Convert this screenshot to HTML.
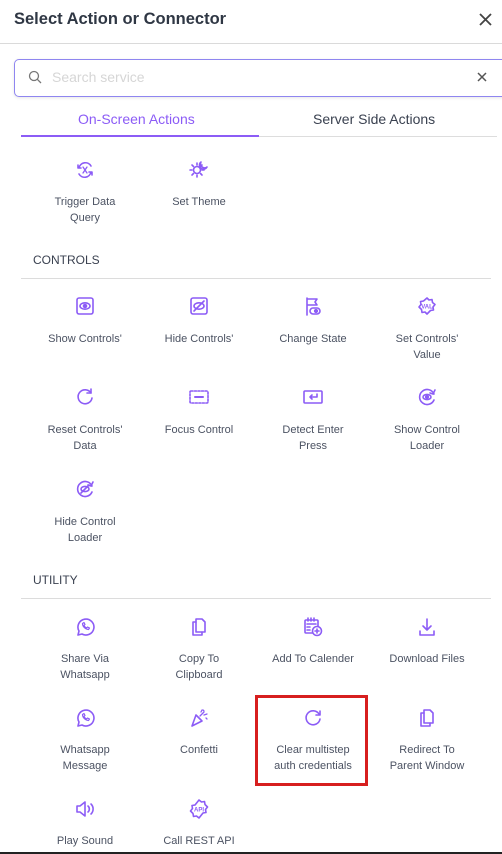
<!DOCTYPE html>
<html><head><meta charset="utf-8"><style>
*{margin:0;padding:0;box-sizing:border-box}
body{width:502px;height:854px;overflow:hidden;background:#fff;font-family:"Liberation Sans",sans-serif;position:relative;color:#4a5261}
.a{position:absolute}
.t{position:absolute;width:114px;text-align:center;font-size:11px;line-height:16px;color:#4b5262}
.i{position:absolute;width:20px;height:20px}
.i svg{width:20px;height:20px;fill:none;stroke:#8c5cf6;stroke-width:1.6;stroke-linecap:round;stroke-linejoin:round}
.h{position:absolute;left:33px;font-size:12px;color:#3a4150}
.ln{position:absolute;left:21px;width:470px;height:1px;background:#dcdcdc}
</style></head><body>
<div class="a" style="left:14px;top:10px;font-size:16.5px;font-weight:bold;color:#2f3744">Select Action or Connector</div>
<svg class="a" style="left:479px;top:13px" width="13" height="13" viewBox="0 0 13 13"><path d="M1 1l11 11M12 1L1 12" stroke="#444" stroke-width="1.8"/></svg>
<div class="a" style="left:0;top:43px;width:502px;height:1px;background:#dadada"></div>
<div class="a" style="left:14px;top:59px;width:500px;height:38px;border:1px solid #8f86f0;border-radius:5px;box-shadow:0 1px 3px rgba(0,0,0,.1)"></div>
<svg class="a" style="left:28px;top:70px" width="14" height="14" viewBox="0 0 14 14"><circle cx="6" cy="6" r="4.5" fill="none" stroke="#777" stroke-width="1.3"/><path d="M9.3 9.3L13 13" stroke="#777" stroke-width="1.3"/></svg>
<div class="a" style="left:52px;top:69px;font-size:14px;color:#d6d6d6">Search service</div>
<svg class="a" style="left:477px;top:72px" width="10" height="10" viewBox="0 0 10 10"><path d="M1 1l8 8M9 1L1 9" stroke="#555" stroke-width="1.5"/></svg>
<div class="a" style="left:78px;top:111px;font-size:14px;color:#8c5cf6">On-Screen Actions</div>
<div class="a" style="left:313px;top:111px;font-size:14px;color:#3a4150">Server Side Actions</div>
<div class="a" style="left:21px;top:135px;width:238px;height:2px;background:#8c5cf6"></div>
<div class="a" style="left:259px;top:136px;width:238px;height:1px;background:#ddd"></div>

<div class="i" style="left:75px;top:160px"><svg viewBox="0 0 20 20"><path d="M4 8a6.5 6.5 0 0 1 12-2M16 12a6.5 6.5 0 0 1-12 2M3 5v3h3M17 15v-3h-3"/><path d="M8 7l4 6M12 7l-4 6" stroke-width="1.3"/></svg></div>
<div class="i" style="left:189px;top:159px"><svg viewBox="0 0 20 20"><circle cx="8" cy="11" r="3.5"/><path d="M8 4v2M8 16v2M1 11h2M13 11h2M3 6l1.5 1.5M13 6l-1.5 1.5M3 16l1.5-1.5M13 16l-1.5-1.5"/><path d="M12 3a4 4 0 1 0 6 5 4 4 0 0 1-6-5z"/></svg></div>
<div class="t" style="left:28px;top:194px">Trigger Data<br>Query</div>
<div class="t" style="left:142px;top:194px">Set Theme</div>

<div class="h" style="top:253px">CONTROLS</div>
<div class="ln" style="top:278px"></div>

<div class="i" style="left:75px;top:296px"><svg viewBox="0 0 20 20"><rect x="2" y="2" width="16" height="16" rx="2"/><ellipse cx="10" cy="10" rx="5" ry="3.2"/><circle cx="10" cy="10" r="1.5" fill="#8c5cf6"/></svg></div>
<div class="i" style="left:189px;top:296px"><svg viewBox="0 0 20 20"><rect x="2" y="2" width="16" height="16" rx="2"/><ellipse cx="10" cy="10" rx="5" ry="3.2"/><path d="M5 15L15 5"/></svg></div>
<div class="i" style="left:303px;top:296px"><svg viewBox="0 0 20 20"><path d="M4 2v17M4 3h10l-2 3 2 3H4"/><rect x="7" y="12" width="10" height="6" rx="3"/><circle cx="13" cy="15" r="1.3" fill="#8c5cf6"/></svg></div>
<div class="i" style="left:417px;top:296px"><svg viewBox="0 0 20 20"><path d="M10 2l2 2 3-0.5.5 3 2.5 2-2 2.5.5 3-3 .5L10 18l-2-2-3 .5-.5-3L2 11l2-2.5L3.5 5.5l3-.5z"/><text x="10" y="12.5" font-size="6" text-anchor="middle" fill="#8c5cf6" stroke="none" font-family="Liberation Sans" font-weight="bold">VAL</text></svg></div>
<div class="t" style="left:28px;top:331px">Show Controls'</div>
<div class="t" style="left:142px;top:331px">Hide Controls'</div>
<div class="t" style="left:256px;top:331px">Change State</div>
<div class="t" style="left:370px;top:331px">Set Controls'<br>Value</div>

<div class="i" style="left:75px;top:387px"><svg viewBox="0 0 20 20"><path d="M16 6a7 7 0 1 0 1 5"/><path d="M16 2v4h-4" /></svg></div>
<div class="i" style="left:189px;top:387px"><svg viewBox="0 0 20 20"><rect x="1" y="4" width="18" height="12" rx="1" stroke-dasharray="2 1.5"/><path d="M6 10h8" stroke-width="2"/></svg></div>
<div class="i" style="left:303px;top:387px"><svg viewBox="0 0 20 20"><rect x="1" y="4" width="18" height="12" rx="1"/><path d="M14 7v3H7M9 8l-2 2 2 2"/></svg></div>
<div class="i" style="left:417px;top:387px"><svg viewBox="0 0 20 20"><path d="M17 7a7.5 7.5 0 1 0 0 6"/><path d="M18 3l-2 4-3-1"/><ellipse cx="10" cy="10" rx="4" ry="2.6"/><circle cx="10" cy="10" r="1.3" fill="#8c5cf6"/></svg></div>
<div class="t" style="left:28px;top:422px">Reset Controls'<br>Data</div>
<div class="t" style="left:142px;top:422px">Focus Control</div>
<div class="t" style="left:256px;top:422px">Detect Enter<br>Press</div>
<div class="t" style="left:370px;top:422px">Show Control<br>Loader</div>

<div class="i" style="left:75px;top:479px"><svg viewBox="0 0 20 20"><path d="M17 7a7.5 7.5 0 1 0 0 6"/><path d="M18 3l-2 4-3-1"/><ellipse cx="10" cy="10" rx="4" ry="2.6"/><path d="M6 14l8-8"/></svg></div>
<div class="t" style="left:28px;top:514px">Hide Control<br>Loader</div>

<div class="h" style="top:573px">UTILITY</div>
<div class="ln" style="top:598px"></div>

<div class="i" style="left:75px;top:617px"><svg viewBox="0 0 20 20"><path d="M3 18l1-4a8 8 0 1 1 3 3z"/><path d="M7.5 6.5c0 3 3 6 6 6l1-1.5-2-1-1 1c-1-.5-2-1.5-2.5-2.5l1-1-1-2z" stroke-width="1.2"/></svg></div>
<div class="i" style="left:189px;top:617px"><svg viewBox="0 0 20 20"><path d="M7 2h6l3 3v10H7z"/><path d="M7 5H4v13h9v-3"/></svg></div>
<div class="i" style="left:303px;top:617px"><svg viewBox="0 0 20 20"><rect x="2" y="3" width="13" height="13" rx="1"/><path d="M5 1v3M8 1v3M11 1v3M4 7h9M4 10h3M4 13h3"/><circle cx="14" cy="14" r="4.5" fill="#fff"/><path d="M14 12v4M12 14h4"/></svg></div>
<div class="i" style="left:417px;top:617px"><svg viewBox="0 0 20 20"><path d="M10 2v11M6 9l4 4 4-4M3 14v4h14v-4"/></svg></div>
<div class="t" style="left:28px;top:651px">Share Via<br>Whatsapp</div>
<div class="t" style="left:142px;top:651px">Copy To<br>Clipboard</div>
<div class="t" style="left:256px;top:651px">Add To Calender</div>
<div class="t" style="left:370px;top:651px">Download Files</div>

<div class="i" style="left:75px;top:708px"><svg viewBox="0 0 20 20"><path d="M3 18l1-4a8 8 0 1 1 3 3z"/><path d="M7.5 6.5c0 3 3 6 6 6l1-1.5-2-1-1 1c-1-.5-2-1.5-2.5-2.5l1-1-1-2z" stroke-width="1.2"/></svg></div>
<div class="i" style="left:189px;top:708px"><svg viewBox="0 0 20 20"><path d="M3 18l4-11 6 6z"/><path d="M12 4l1-2M15 7l3-1M14 2l1 1M17 10l1 1M11 8l4-4" stroke-width="1.3"/></svg></div>
<div class="i" style="left:303px;top:708px"><svg viewBox="0 0 20 20"><path d="M16 6a7 7 0 1 0 1 5"/><path d="M17 3v4h-4"/></svg></div>
<div class="i" style="left:417px;top:708px"><svg viewBox="0 0 20 20"><path d="M7 2h6l3 3v10H7z"/><path d="M7 5H4v13h9v-3"/></svg></div>
<div class="t" style="left:28px;top:742px">Whatsapp<br>Message</div>
<div class="t" style="left:142px;top:742px">Confetti</div>
<div class="t" style="left:256px;top:742px">Clear multistep<br>auth credentials</div>
<div class="t" style="left:370px;top:742px">Redirect To<br>Parent Window</div>
<div class="a" style="left:255px;top:695px;width:113px;height:91px;border:3px solid #d71f1f"></div>

<div class="i" style="left:75px;top:799px"><svg viewBox="0 0 20 20"><path d="M2 7h3l5-4v14l-5-4H2z"/><path d="M13 7a4 4 0 0 1 0 6M16 5a7 7 0 0 1 0 10"/></svg></div>
<div class="i" style="left:189px;top:799px"><svg viewBox="0 0 20 20"><path d="M10 1l2.5 2 3-.5.5 3 2.5 2.5-2 2.5.5 3-3 .5L10 19l-2.5-2-3 .5-.5-3L1.5 12l2-2.5L3 6.5l3-.5z"/><text x="10" y="12.5" font-size="6" text-anchor="middle" fill="#8c5cf6" stroke="none" font-family="Liberation Sans" font-weight="bold">API</text></svg></div>
<div class="t" style="left:28px;top:833px">Play Sound</div>
<div class="t" style="left:142px;top:833px">Call REST API</div>
<div class="a" style="left:0;top:852px;width:502px;height:2px;background:#222"></div>
</body></html>
